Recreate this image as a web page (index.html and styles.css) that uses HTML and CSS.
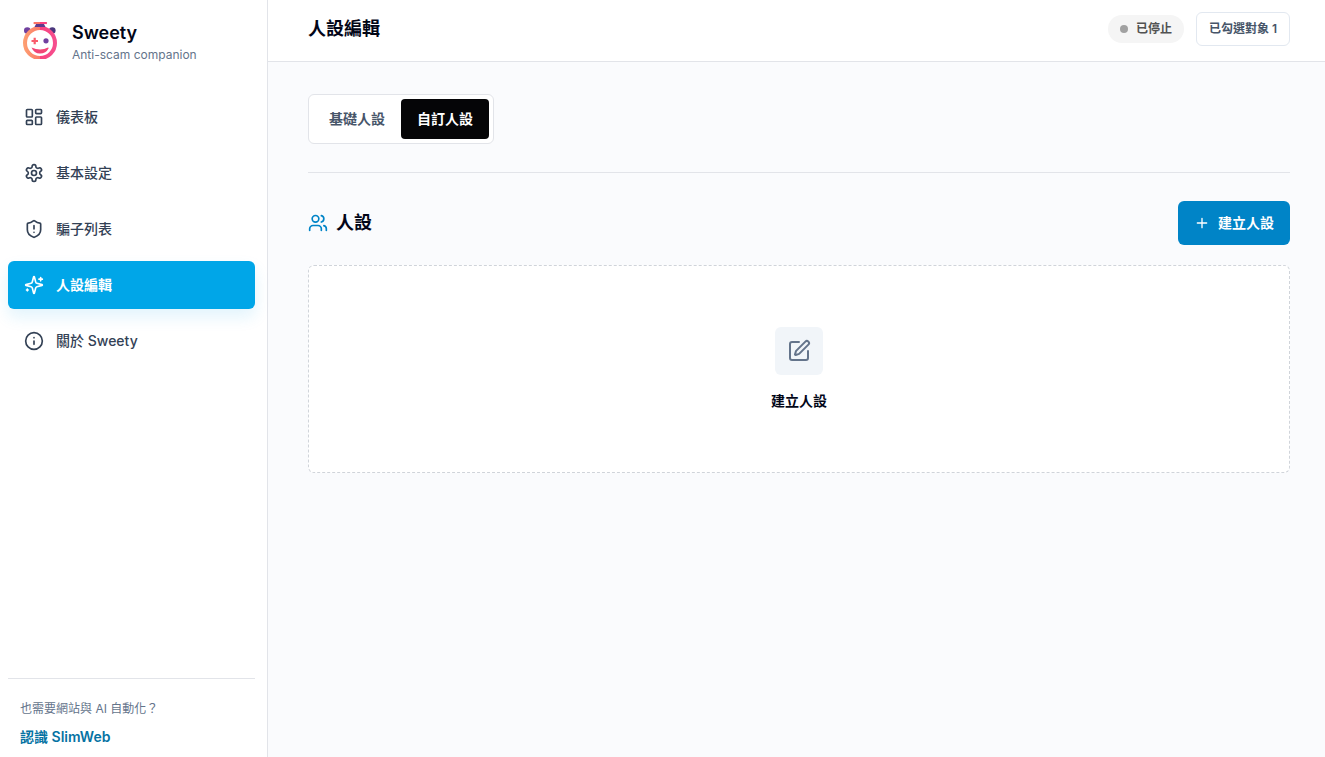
FILE: index.html
```html
<!DOCTYPE html>
<html lang="zh-Hant">
<head>
  <meta charset="UTF-8" />
  <meta name="viewport" content="width=device-width, initial-scale=1.0"/>
  <title>Sweety</title>
  <link rel="stylesheet" href="styles.css">
</head>
<body>
  <div class="app">
    <aside class="sidebar">
      <div class="brand">
        <svg class="logo" viewBox="0 0 40 40" aria-hidden="true">
          <defs>
            <linearGradient id="ring" gradientUnits="userSpaceOnUse" x1="3" y1="0" x2="37" y2="0">
              <stop offset="0" stop-color="#fda172"/>
              <stop offset="0.49" stop-color="#fb7a68"/>
              <stop offset="0.51" stop-color="#f9417f"/>
              <stop offset="1" stop-color="#f5508f"/>
            </linearGradient>
          </defs>
          <circle cx="7.300" cy="11.500" r="3.300" fill="#70409f"/>
          <circle cx="32.300" cy="11.500" r="3.300" fill="#49377d"/>
          <circle cx="20" cy="24" r="15" fill="#fff" stroke="url(#ring)" stroke-width="4"/>
          <path d="M16.500 4h7l2 4h-11z" fill="#5d3a8c"/>
          <path d="M14 3h6v2h-5a1 1 0 0 1-1-2z" fill="#fb7466"/>
          <path d="M20 3h6.500a1 1 0 0 1-1 2H20z" fill="#f9417f"/>
          <path d="M11.500 22h6.500M14.700 18.800v6.400" stroke="#f95c6c" stroke-width="2.200" fill="none"/>
          <circle cx="26" cy="21.800" r="2.600" fill="#70409f"/>
          <path d="M11.500 28.500q9 4 16.500 0q1 0 .5 1q-2.500 5-8.500 5q-6 0-8.500-6z" fill="#f24576"/>
        </svg>
        <div class="brand-text">
          <div class="brand-name">Sweety</div>
          <div class="brand-sub">Anti-scam companion</div>
        </div>
      </div>

      <nav class="nav">
        <a class="nav-item" href="#">
          <svg class="icon" viewBox="0 0 24 24"><rect x="3" y="3" width="7" height="9" rx="1"/><rect x="14" y="3" width="7" height="5" rx="1"/><rect x="14" y="12" width="7" height="9" rx="1"/><rect x="3" y="16" width="7" height="5" rx="1"/></svg>
          儀表板
        </a>
        <a class="nav-item" href="#">
          <svg class="icon" viewBox="0 0 24 24"><path d="M12.220 2h-.44a2 2 0 0 0-2 2v.18a2 2 0 0 1-1 1.730l-.43.25a2 2 0 0 1-2 0l-.15-.08a2 2 0 0 0-2.730.73l-.22.38a2 2 0 0 0 .73 2.730l.15.1a2 2 0 0 1 1 1.720v.51a2 2 0 0 1-1 1.740l-.15.09a2 2 0 0 0-.73 2.730l.22.38a2 2 0 0 0 2.730.73l.15-.08a2 2 0 0 1 2 0l.43.25a2 2 0 0 1 1 1.730V20a2 2 0 0 0 2 2h.44a2 2 0 0 0 2-2v-.18a2 2 0 0 1 1-1.730l.43-.25a2 2 0 0 1 2 0l.15.08a2 2 0 0 0 2.730-.73l.22-.39a2 2 0 0 0-.73-2.730l-.15-.08a2 2 0 0 1-1-1.740v-.5a2 2 0 0 1 1-1.740l.15-.09a2 2 0 0 0 .73-2.730l-.22-.38a2 2 0 0 0-2.730-.73l-.15.08a2 2 0 0 1-2 0l-.43-.25a2 2 0 0 1-1-1.730V4a2 2 0 0 0-2-2z"/><circle cx="12" cy="12" r="3"/></svg>
          基本設定
        </a>
        <a class="nav-item" href="#">
          <svg class="icon" viewBox="0 0 24 24"><path d="M20 13c0 5-3.500 7.500-7.660 8.950a1 1 0 0 1-.67-.01C7.500 20.500 4 18 4 13V6a1 1 0 0 1 1-1c2 0 4.500-1.200 6.240-2.720a1.170 1.170 0 0 1 1.520 0C14.510 3.810 17 5 19 5a1 1 0 0 1 1 1z"/><path d="M12 8v4M12 16h.01"/></svg>
          騙子列表
        </a>
        <a class="nav-item active" href="#" aria-current="page">
          <svg class="icon" viewBox="0 0 24 24"><path d="M9.937 15.500A2 2 0 0 0 8.500 14.063l-6.135-1.582a.5.5 0 0 1 0-.962L8.500 9.936A2 2 0 0 0 9.937 8.500l1.582-6.135a.5.5 0 0 1 .963 0L14.063 8.500A2 2 0 0 0 15.500 9.937l6.135 1.581a.5.5 0 0 1 0 .964L15.500 14.063a2 2 0 0 0-1.437 1.437l-1.582 6.135a.5.5 0 0 1-.963 0z"/><path d="M20 3v4M22 5h-4M4 17v2M5 18H3"/></svg>
          人設編輯
        </a>
        <a class="nav-item" href="#">
          <svg class="icon" viewBox="0 0 24 24"><circle cx="12" cy="12" r="10"/><path d="M12 16v-4M12 8h.01"/></svg>
          關於 Sweety
        </a>
      </nav>

      <div class="sidebar-footer">
        <div class="footer-text">也需要網站與 AI 自動化？</div>
        <a class="footer-link" href="#">認識 SlimWeb</a>
      </div>
    </aside>

    <div class="page">
      <header class="topbar">
        <h1 class="page-title">人設編輯</h1>
        <div class="topbar-actions">
          <div class="status"><span class="status-dot"></span>已停止</div>
          <button class="target-btn" type="button">已勾選對象 1</button>
        </div>
      </header>

      <main class="content">
        <div class="tabs-row">
          <div class="tabs" role="tablist">
            <button class="tab" type="button" role="tab" aria-selected="false">基礎人設</button>
            <button class="tab selected" type="button" role="tab" aria-selected="true">自訂人設</button>
          </div>
        </div>

        <div class="section-head">
          <h2 class="section-title">
            <svg class="icon" viewBox="0 0 24 24"><path d="M16 21v-2a4 4 0 0 0-4-4H6a4 4 0 0 0-4 4v2"/><circle cx="9" cy="7" r="4"/><path d="M22 21v-2a4 4 0 0 0-3-3.870M16 3.130a4 4 0 0 1 0 7.750"/></svg>
            人設
          </h2>
          <button class="create-btn" type="button">
            <svg class="icon icon-sm" viewBox="0 0 24 24"><path d="M5 12h14M12 5v14"/></svg>
            建立人設
          </button>
        </div>

        <div class="empty">
          <div class="empty-icon">
            <svg class="icon icon-lg" viewBox="0 0 24 24"><path d="M12 3H5a2 2 0 0 0-2 2v14a2 2 0 0 0 2 2h14a2 2 0 0 0 2-2v-7"/><path d="M18.375 2.625a1 1 0 0 1 3 3l-9.013 9.014a2 2 0 0 1-.853.505l-2.873.84a.5.5 0 0 1-.62-.62l.84-2.873a2 2 0 0 1 .506-.852z"/></svg>
          </div>
          <div class="empty-title">建立人設</div>
        </div>
      </main>
    </div>
  </div>
</body>
</html>
```
FILE: styles.css
```css
* {
  box-sizing: border-box;
}

body {
  margin: 0;
  background: #fafbfd;
  color: #020617;
  font-family: Inter, "Noto Sans CJK TC", sans-serif;
  font-size: 14px;
  line-height: 20px;
}

button {
  font: inherit;
  cursor: pointer;
}

a {
  text-decoration: none;
}

.app {
  display: flex;
  min-height: 100vh;
}

.icon {
  width: 20px;
  height: 20px;
  flex-shrink: 0;
  fill: none;
  stroke: currentColor;
  stroke-width: 2;
  stroke-linecap: round;
  stroke-linejoin: round;
}

.icon-sm {
  width: 16px;
  height: 16px;
}

.icon-lg {
  width: 24px;
  height: 24px;
}

/* Sidebar */
.sidebar {
  width: 268px;
  flex-shrink: 0;
  display: flex;
  flex-direction: column;
  padding: 19px 12px 8px 8px;
  background: #fff;
  border-right: 1px solid #e2e4e9;
}

.brand {
  display: flex;
  align-items: flex-start;
  gap: 12px;
  padding: 0 12px;
}

.logo {
  width: 40px;
  height: 40px;
}

.brand-name {
  font-size: 18px;
  font-weight: 600;
  line-height: 28px;
}

.brand-sub {
  color: #64748b;
  font-size: 12px;
  line-height: 16px;
}

.nav {
  display: flex;
  flex-direction: column;
  gap: 8px;
  margin-top: 30px;
}

.nav-item {
  display: flex;
  align-items: center;
  gap: 12px;
  height: 48px;
  padding: 0 16px;
  border-radius: 6px;
  color: #334155;
  font-weight: 500;
}

.nav-item.active {
  background: #00a6e8;
  color: #fff;
  font-weight: 600;
  box-shadow: 0 8px 16px rgba(14, 165, 233, 0.12);
}

.sidebar-footer {
  display: flex;
  flex-direction: column;
  gap: 8px;
  margin-top: auto;
  padding: 20px 12px 2px;
  border-top: 1px solid #e2e4e9;
}

.footer-text {
  color: #64748b;
  font-size: 12px;
}

.footer-link {
  color: #0673a3;
  font-weight: 600;
}

/* Top bar */
.page {
  flex: 1;
  min-width: 0;
}

.topbar {
  display: flex;
  align-items: center;
  justify-content: space-between;
  padding: 12px 35px 15px 40px;
  background: #fff;
  border-bottom: 1px solid #e2e4e9;
}

.page-title,
.section-title {
  margin: 0;
  font-size: 18px;
  font-weight: 600;
  line-height: 28px;
}

.topbar-actions {
  display: flex;
  align-items: center;
  gap: 12px;
  font-size: 12px;
  font-weight: 600;
}

.status {
  display: flex;
  align-items: center;
  gap: 8px;
  height: 28px;
  padding: 0 12px;
  border-radius: 14px;
  background: #f5f5f5;
  color: #525252;
}

.status-dot {
  width: 8px;
  height: 8px;
  border-radius: 50%;
  background: #a1a1a1;
}

.target-btn {
  height: 34px;
  padding: 0 12px;
  border: 1px solid #e2e8f0;
  border-radius: 6px;
  background: #fff;
  color: #475569;
}

/* Content */
.content {
  padding: 32px 35px 32px 40px;
}

.tabs-row {
  display: flex;
  padding-bottom: 28px;
  border-bottom: 1px solid #e2e4e9;
}

.tabs {
  display: flex;
  padding: 4px;
  border: 1px solid #e2e4e9;
  border-radius: 6px;
  background: #fff;
}

.tab {
  height: 40px;
  padding: 0 16px;
  border: none;
  border-radius: 4px;
  background: none;
  color: #475569;
  font-weight: 600;
}

.tab.selected {
  background: #050507;
  color: #fff;
}

.section-head {
  display: flex;
  align-items: center;
  justify-content: space-between;
  margin: 28px 0 20px;
}

.section-title {
  display: flex;
  align-items: center;
  gap: 8px;
}

.section-title .icon {
  color: #0084c7;
}

.create-btn {
  display: flex;
  align-items: center;
  gap: 8px;
  height: 44px;
  padding: 0 16px;
  border: none;
  border-radius: 6px;
  background: #0084c7;
  color: #fff;
  font-weight: 600;
}

.empty {
  display: flex;
  flex-direction: column;
  align-items: center;
  justify-content: center;
  gap: 16px;
  min-height: 208px;
  border: 1px dashed #d0d4da;
  border-radius: 6px;
  background: #fff;
}

.empty-icon {
  display: flex;
  align-items: center;
  justify-content: center;
  width: 48px;
  height: 48px;
  border-radius: 6px;
  background: #f1f5f9;
  color: #64748b;
}

.empty-title {
  font-weight: 600;
}
```
